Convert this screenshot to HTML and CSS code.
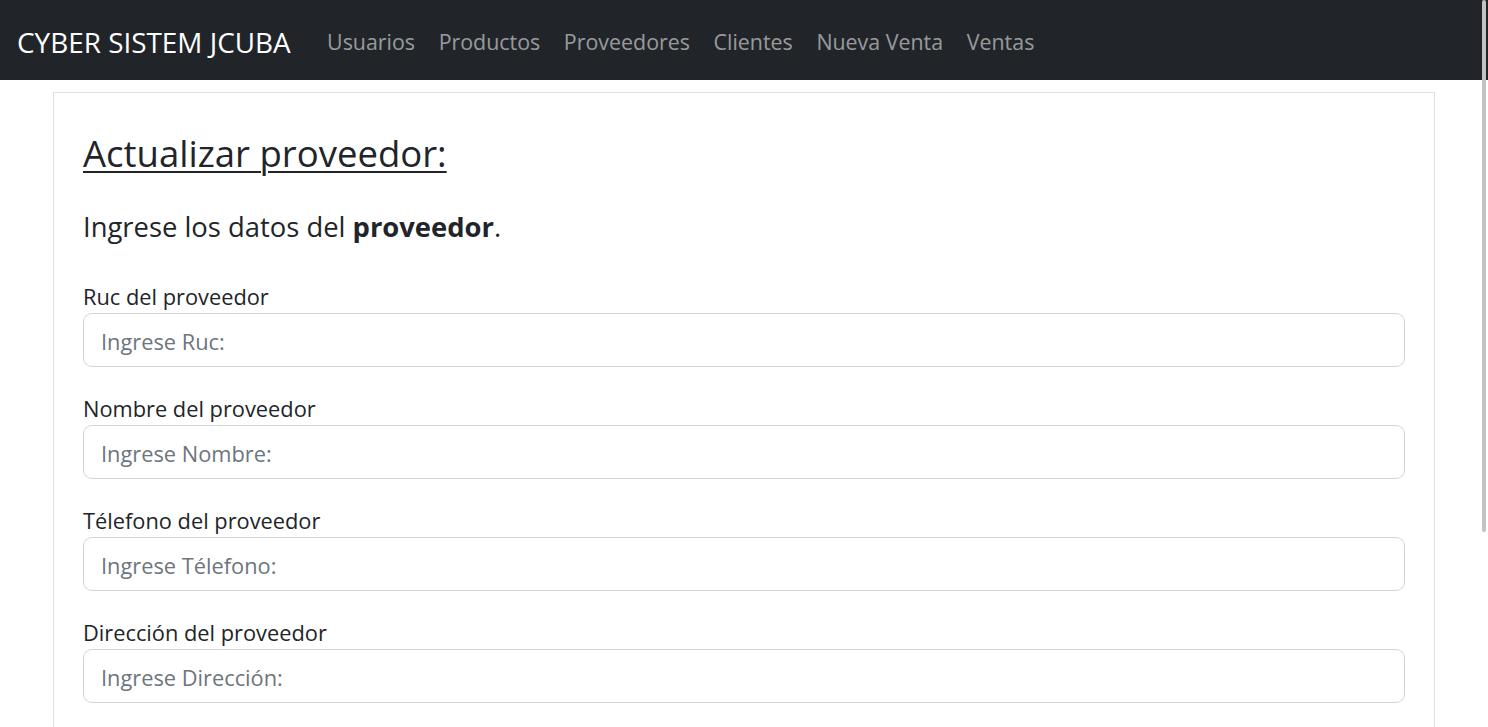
FILE: index.html
```html
<!DOCTYPE html>
<html lang="es">
<head>
<meta charset="utf-8">
<title>Actualizar proveedor</title>
<link rel="stylesheet" href="styles.css">
</head>
<body>
<nav class="navbar">
  <a class="brand" href="#">CYBER SISTEM JCUBA</a>
  <ul class="nav">
    <li><a class="nav-link" href="#">Usuarios</a></li>
    <li><a class="nav-link" href="#">Productos</a></li>
    <li><a class="nav-link" href="#">Proveedores</a></li>
    <li><a class="nav-link" href="#">Clientes</a></li>
    <li><a class="nav-link" href="#">Nueva Venta</a></li>
    <li><a class="nav-link" href="#">Ventas</a></li>
  </ul>
</nav>
<main class="page">
  <section class="card">
    <h2 class="title">Actualizar proveedor:</h2>
    <p class="lead">Ingrese los datos del <b>proveedor</b>.</p>
    <form class="form">
      <div class="field">
        <label class="label" for="ruc">Ruc del proveedor</label>
        <input class="input" id="ruc" type="text" placeholder="Ingrese Ruc:">
      </div>
      <div class="field">
        <label class="label" for="nombre">Nombre del proveedor</label>
        <input class="input" id="nombre" type="text" placeholder="Ingrese Nombre:">
      </div>
      <div class="field">
        <label class="label" for="telefono">Télefono del proveedor</label>
        <input class="input" id="telefono" type="text" placeholder="Ingrese Télefono:">
      </div>
      <div class="field">
        <label class="label" for="direccion">Dirección del proveedor</label>
        <input class="input" id="direccion" type="text" placeholder="Ingrese Dirección:">
      </div>
    </form>
  </section>
</main>
<div class="scrollbar"></div>
</body>
</html>
```
FILE: styles.css
```css
html {
  overflow: hidden;
}
body {
  margin: 0;
  font-family: "Open Sans", "Noto Sans", sans-serif;
  color: #212529;
  background: #fff;
  height: 727px;
  overflow: hidden;
}
.navbar {
  height: 80px;
  box-sizing: border-box;
  padding: 4px 0 0 17px;
  background: #212529;
  display: flex;
  align-items: center;
}
.brand {
  color: #fff;
  text-decoration: none;
  font-size: 27.9px;
  line-height: 41px;
  margin-right: 24.5px;
  white-space: nowrap;
}
.nav {
  list-style: none;
  margin: 0;
  padding: 0;
  display: flex;
}
.nav-link {
  display: block;
  padding: 0 11.8px;
  color: rgba(255, 255, 255, 0.55);
  text-decoration: none;
  font-size: 21.4px;
  line-height: 32px;
  white-space: nowrap;
}
.page {
  padding: 12px 53px 0;
}
.card {
  border: 1px solid #dee2e6;
  padding: 38px 29px 40px;
  min-height: 700px;
}
.title {
  margin: 0 0 31px;
  font-size: 36.5px;
  line-height: 44px;
  font-weight: 400;
  text-decoration: underline;
  text-decoration-thickness: 2px;
  text-underline-offset: 4px;
}
.lead {
  margin: 0 0 33px;
  font-size: 27.4px;
  line-height: 42px;
}
.lead b {
  font-weight: 700;
}
.form {
  margin: 0;
}
.field {
  margin-bottom: 26px;
}
.label {
  display: block;
  margin-bottom: 0;
  font-size: 21.8px;
  line-height: 32px;
}
.input {
  display: block;
  width: 100%;
  height: 54px;
  box-sizing: border-box;
  padding: 2px 17px 0;
  border: 1px solid #ced4da;
  border-radius: 9px;
  font-family: inherit;
  font-size: 21.8px;
  color: #212529;
  background: #fff;
  outline: none;
}
.input::placeholder {
  color: #6c757d;
  opacity: 1;
}
.scrollbar {
  position: fixed;
  top: 0;
  right: 2px;
  width: 4px;
  height: 532px;
  border-radius: 2px;
  background: #c2c2c2;
}
```
